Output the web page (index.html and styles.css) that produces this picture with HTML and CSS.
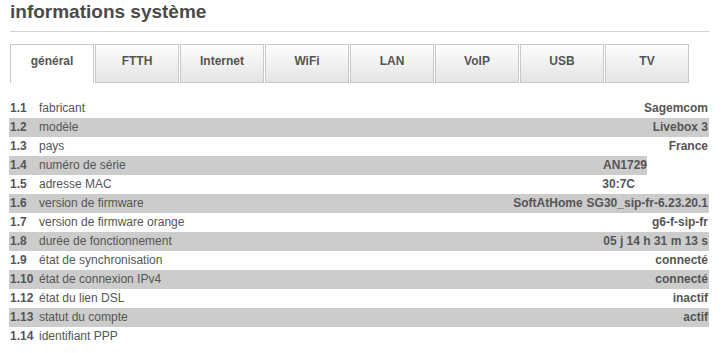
FILE: index.html
```html
<!DOCTYPE html>
<html lang="fr">
<head>
    <meta charset="UTF-8">
    <title>informations système</title>
    <link rel="stylesheet" href="styles.css">
</head>
<body>
    <div class="page">
        <h1>informations système</h1>
        <hr class="rule">

        <ul class="tabs">
            <li class="tab active">général</li>
            <li class="tab">FTTH</li>
            <li class="tab">Internet</li>
            <li class="tab">WiFi</li>
            <li class="tab">LAN</li>
            <li class="tab">VoIP</li>
            <li class="tab">USB</li>
            <li class="tab">TV</li>
        </ul>

        <table class="info">
            <tr>
                <td class="num">1.1</td>
                <td class="label">fabricant</td>
                <td class="value">Sagemcom</td>
            </tr>
            <tr>
                <td class="num">1.2</td>
                <td class="label">modèle</td>
                <td class="value">Livebox 3</td>
            </tr>
            <tr>
                <td class="num">1.3</td>
                <td class="label">pays</td>
                <td class="value">France</td>
            </tr>
            <tr>
                <td class="num">1.4</td>
                <td class="label">numéro de série</td>
                <td class="value">AN1729<span class="mask"></span></td>
            </tr>
            <tr>
                <td class="num">1.5</td>
                <td class="label">adresse MAC</td>
                <td class="value mac">30:7C</td>
            </tr>
            <tr>
                <td class="num">1.6</td>
                <td class="label">version de firmware</td>
                <td class="value"><span class="vendor">SoftAtHome</span>SG30_sip-fr-6.23.20.1</td>
            </tr>
            <tr>
                <td class="num">1.7</td>
                <td class="label">version de firmware orange</td>
                <td class="value">g6-f-sip-fr</td>
            </tr>
            <tr>
                <td class="num">1.8</td>
                <td class="label">durée de fonctionnement</td>
                <td class="value">05 j 14 h 31 m 13 s</td>
            </tr>
            <tr>
                <td class="num">1.9</td>
                <td class="label">état de synchronisation</td>
                <td class="value">connecté</td>
            </tr>
            <tr>
                <td class="num">1.10</td>
                <td class="label">état de connexion IPv4</td>
                <td class="value">connecté</td>
            </tr>
            <tr>
                <td class="num">1.12</td>
                <td class="label">état du lien DSL</td>
                <td class="value">inactif</td>
            </tr>
            <tr>
                <td class="num">1.13</td>
                <td class="label">statut du compte</td>
                <td class="value">actif</td>
            </tr>
            <tr>
                <td class="num">1.14</td>
                <td class="label">identifiant PPP</td>
                <td class="value"></td>
            </tr>
        </table>
    </div>
</body>
</html>
```

FILE: styles.css
```css
body {
    margin: 0;
    padding: 0;
    background: #fff;
    color: #555;
    font-family: "Liberation Sans", Arial, sans-serif;
    font-size: 12px;
}

.page {
    padding: 1px 14px 0 10px;
}

h1 {
    margin: 0;
    font-size: 19px;
    line-height: 22px;
    font-weight: bold;
    color: #4a4a4a;
}

.rule {
    margin: 8px 0 0 0;
    width: 699px;
    border: none;
    border-top: 1px solid #d2d2d2;
    height: 0;
}

.tabs {
    list-style: none;
    margin: 12px 0 0 0;
    padding: 0;
    display: flex;
    gap: 1px;
}

.tab {
    box-sizing: border-box;
    width: 84px;
    height: 39px;
    padding-top: 8px;
    line-height: 16px;
    text-align: center;
    font-weight: bold;
    color: #555;
    border: 1px solid #c9c9c9;
    background: linear-gradient(#fdfdfd, #e4e4e4);
}

.tab.active {
    background: #fff;
    border-bottom: none;
}

.info {
    margin: 16px 0 0 -1px;
    width: 700px;
    border-collapse: collapse;
}

.info td {
    padding: 0;
    height: 19px;
    line-height: 19px;
    white-space: nowrap;
}

.info tr:nth-child(even) {
    background: #cccccc;
}

.num {
    width: 29px;
    padding-left: 1px !important;
    font-weight: bold;
}

.label {
    color: #555;
}

.value {
    text-align: right;
    font-weight: bold;
    padding-right: 1px !important;
}

.value.mac {
    padding-right: 74px !important;
}

.mask {
    display: inline-block;
    vertical-align: top;
    width: 62px;
    height: 19px;
    margin-right: -1px;
    background: #fff;
}

.vendor {
    margin-right: 4px;
}
```
